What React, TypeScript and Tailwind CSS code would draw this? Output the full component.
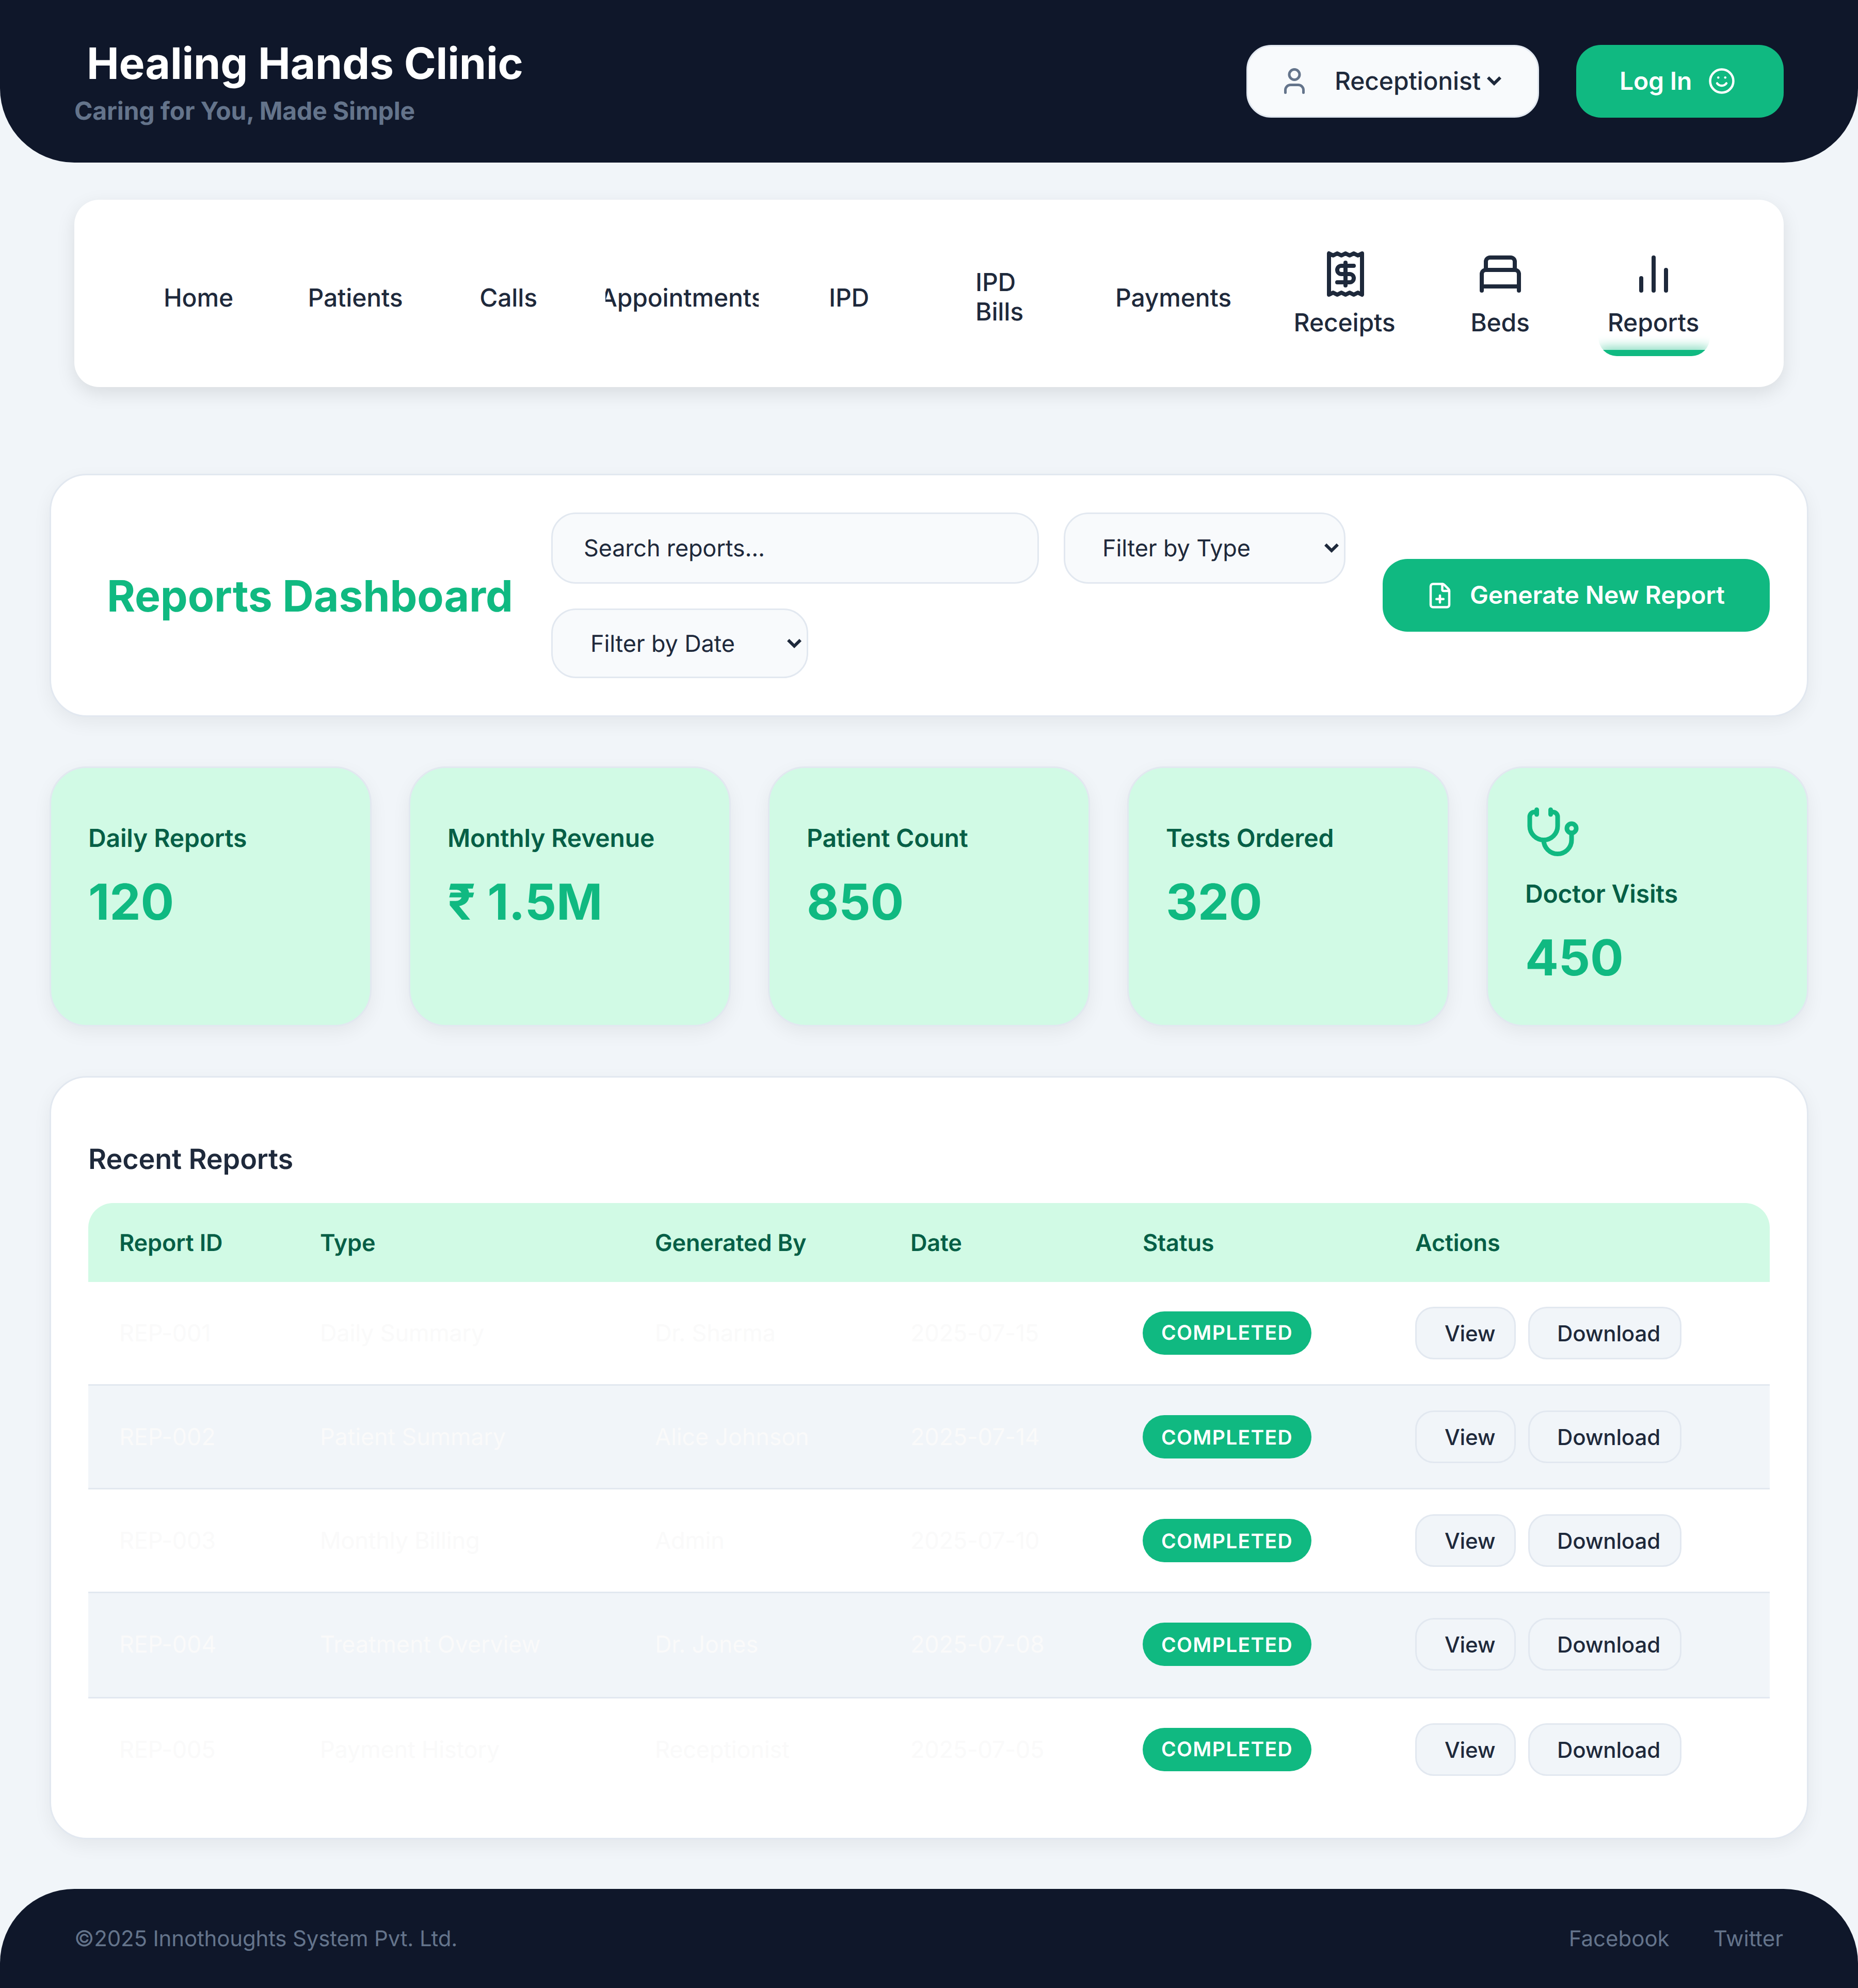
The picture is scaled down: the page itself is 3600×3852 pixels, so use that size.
import React from "react";
import { BedSingle, FilePlus, Receipt, Smile, Stethoscope, User } from "lucide-react";

function Chevron({ className }: { className: string }) {
  return (
    <svg viewBox="0 0 28 18" fill="none" stroke="#1e293b" strokeWidth="6" className={className}>
      <path d="M2.1 2.1 14 13.8 25.9 2.1" />
    </svg>
  );
}

function BarsIcon() {
  return (
    <svg viewBox="0 0 24 24" fill="none" stroke="currentColor" strokeWidth="2" strokeLinecap="round" className="size-24 shrink-0">
      <path d="M18 20V10M12 20V4M6 20v-6" />
    </svg>
  );
}

const cardShadow = "shadow-[0_12px_36px_rgba(0,0,0,0.06)]";

function Header() {
  return (
    <header className="flex h-[315px] items-center justify-between rounded-b-[144px] bg-[#0f172a] px-36">
      <div className="flex flex-col">
        <h1 className="pt-0.5 pl-6 text-[84px] leading-[102px] font-bold text-white">Healing Hands Clinic</h1>
        <p className="mt-[11px] text-[48px] leading-[58px] font-bold text-[#64748b]">Caring for You, Made Simple</p>
      </div>
      <div className="flex items-center gap-18">
        <div className="flex h-[141px] w-[567px] items-center rounded-[48px] border-3 border-[#e2e8f0] bg-[#f8fafc] pb-0.5 pl-15">
          <User className="size-15 shrink-0 text-[#64748b]" strokeWidth={2} />
          <span className="ml-12 text-[48px] leading-[58px] font-medium text-[#1e293b]">Receptionist</span>
          <Chevron className="ml-3 h-[18px] w-7" />
        </div>
        <button className="flex h-[141px] w-[402px] items-center rounded-[48px] bg-[#10b981] pb-0.5 pl-[84px] text-[48px] leading-[58px] font-semibold text-white">
          Log In
          <Smile className="ml-[31px] size-[54px]" strokeWidth={2} />
        </button>
      </div>
    </header>
  );
}

function NavText({ className, children }: { className: string; children: React.ReactNode }) {
  return (
    <a className={`flex h-[243px] shrink-0 items-center justify-center leading-[57px] ${className}`}>
      {children}
    </a>
  );
}

function NavIcon({ className, icon, children }: { className: string; icon: React.ReactNode; children: React.ReactNode }) {
  return (
    <a className={`flex h-[243px] shrink-0 flex-col items-center gap-[17px] pt-9 leading-[58px] ${className}`}>
      {icon}
      {children}
    </a>
  );
}

function Nav() {
  return (
    <nav className="mx-36 mt-18 flex h-[363px] items-center gap-24 rounded-[48px] bg-white px-36 text-[48px] font-medium text-[#1e293b] shadow-[0_12px_36px_rgba(0,0,0,0.1)]">
      <NavText className="w-[193px] pt-[15px]">Home</NavText>
      <NavText className="w-[223px] pt-[15px]">Patients</NavText>
      <NavText className="w-[178px] pt-[15px]">Calls</NavText>
      <NavText className="ml-[3px] w-[297px] overflow-hidden pt-[15px]">Appointments</NavText>
      <NavText className="w-[158px] pt-[15px]">IPD</NavText>
      <NavText className="w-[233px] pt-[13px]">
        <span>
          IPD
          <br />
          Bills
        </span>
      </NavText>
      <NavText className="w-[249px] pt-[15px]">Payments</NavText>
      <NavIcon className="w-[222px]" icon={<Receipt className="ml-1 size-24 shrink-0" />}>Receipts</NavIcon>
      <NavIcon className="w-[189px]" icon={<BedSingle className="size-24 shrink-0" />}>Beds</NavIcon>
      <NavIcon
        className="relative w-[216px] overflow-hidden rounded-[36px] pr-[3px] after:absolute after:inset-x-0 after:bottom-0 after:h-3 after:bg-[#10b981] after:shadow-[0_0_24px_#10b981]"
        icon={<BarsIcon />}
      >
        <span className="relative z-10">Reports</span>
      </NavIcon>
    </nav>
  );
}

function Toolbar() {
  const field = "flex items-center rounded-[48px] border-3 border-[#e2e8f0] bg-[#f8fafc] text-[45px] text-[#1e293b]";
  return (
    <section className={`flex h-[471px] items-center rounded-[72px] border-3 border-[#e2e8f0] bg-white px-18 ${cardShadow}`}>
      <h2 className="w-[897px] pt-1 pl-9 text-[84px] font-bold whitespace-nowrap text-[#10b981]">Reports Dashboard</h2>
      <div className="flex w-[1539px] flex-wrap gap-12">
        <div className={`h-[138px] w-[945px] pl-15 ${field}`}>Search reports...</div>
        <div className={`h-[138px] w-[546px] justify-between pr-2.5 pl-18 ${field}`}>
          Filter by Type
          <Chevron className="h-[18px] w-7" />
        </div>
        <div className={`h-[135px] w-[498px] justify-between pr-2.5 pl-[73px] ${field}`}>
          Filter by Date
          <Chevron className="h-[18px] w-7" />
        </div>
      </div>
      <button className="ml-auto flex h-[141px] w-[750px] items-center rounded-[48px] bg-[#10b981] pl-[84px] text-[48px] leading-[58px] font-semibold whitespace-nowrap text-white">
        <FilePlus className="mr-[31px] size-[54px]" />
        <span className="pb-0.5">Generate New Report</span>
      </button>
    </section>
  );
}

const stats = [
  { label: "Daily Reports", value: "120" },
  { label: "Monthly Revenue", value: "₹ 1.5M" },
  { label: "Patient Count", value: "850" },
  { label: "Tests Ordered", value: "320" },
  { label: "Doctor Visits", value: "450", icon: true },
];

function Stats() {
  return (
    <section className="mt-24 grid grid-cols-5 gap-18">
      {stats.map((s) => (
        <div key={s.label} className={`h-[504px] rounded-[72px] border-3 border-[#e2e8f0] bg-[#d1fae5] p-18 ${cardShadow}`}>
          {s.icon && <Stethoscope className="size-27 text-[#10b981]" />}
          <div className="mt-[35px] text-[48px] leading-[58px] font-semibold text-[#065f46]">{s.label}</div>
          <div className="mt-[37px] text-[96px] leading-[116px] font-bold text-[#10b981]">{s.value}</div>
        </div>
      ))}
    </section>
  );
}

const columns = "grid grid-cols-[389px_649px_495px_450px_528px_1fr] *:pl-15";

const reports = [
  { cells: ["REP-001", "Daily Summary", "Dr. Sharma", "2025-07-15"], row: "h-[201px] border-b-3", badge: "" },
  { cells: ["REP-002", "Patient Summary", "Alice Johnson", "2025-07-14"], row: "h-[201px] border-b-3 bg-[#f1f5f9]", badge: "pt-1" },
  { cells: ["REP-003", "Monthly Billing", "Admin", "2025-07-10"], row: "h-[201px] border-b-3", badge: "pt-1" },
  { cells: ["REP-004", "Treatment Overview", "Dr. Jones", "2025-07-08"], row: "h-[204px] border-b-3 bg-[#f1f5f9] pb-[3px]", badge: "pt-1" },
  { cells: ["REP-005", "Payment History", "Receptionist", "2025-07-05"], row: "h-[198px]", badge: "" },
];

function Reports() {
  const action = "flex h-[102px] items-center rounded-[36px] border-3 border-[#e2e8f0] bg-[#f1f5f9] text-[42px] font-medium text-[#1e293b]";
  return (
    <section className={`mt-24 h-[1479px] rounded-[72px] border-3 border-[#e2e8f0] bg-white px-18 ${cardShadow}`}>
      <h3 className="mt-[126px] text-[54px] leading-[66px] font-semibold text-[#1e293b]">Recent Reports</h3>
      <div className={`mt-[51px] h-[153px] items-center rounded-t-[48px] bg-[#d1fae5] text-[45px] font-semibold text-[#065f46] ${columns}`}>
        <div>Report ID</div>
        <div>Type</div>
        <div>Generated By</div>
        <div>Date</div>
        <div>Status</div>
        <div>Actions</div>
      </div>
      {reports.map((r) => (
        <div key={r.cells[0]} className={`items-center border-[#e2e8f0] text-[45px] text-[#fafafa] ${r.row} ${columns}`}>
          {r.cells.map((c) => (
            <div key={c}>{c}</div>
          ))}
          <div>
            <span
              className={`flex h-[84px] w-[327px] items-center justify-center rounded-[42px] bg-[#10b981] text-[39px] font-semibold tracking-[1.35px] text-white ${r.badge}`}
            >
              COMPLETED
            </span>
          </div>
          <div className="flex gap-6">
            <button className={`w-[195px] pl-[54px] ${action}`}>View</button>
            <button className={`w-[297px] pl-[53px] ${action}`}>Download</button>
          </div>
        </div>
      ))}
    </section>
  );
}

function Footer() {
  return (
    <footer className="mt-24 flex h-[192px] items-center justify-between rounded-t-[144px] bg-[#0f172a] px-36 text-[42px] text-[#64748b]">
      <span>©2025 Innothoughts System Pvt. Ltd.</span>
      <div className="flex gap-[85px] pr-px tracking-normal">
        <a>Facebook</a>
        <a>Twitter</a>
      </div>
    </footer>
  );
}

export default function App() {
  return (
    <div className="h-[3852px] w-[3600px] overflow-hidden bg-[#f1f5f9] font-['Inter',sans-serif] tracking-[-0.16px] [text-rendering:geometricPrecision]">
      <Header />
      <Nav />
      <main className="mt-42 px-24">
        <Toolbar />
        <Stats />
        <Reports />
      </main>
      <Footer />
    </div>
  );
}
